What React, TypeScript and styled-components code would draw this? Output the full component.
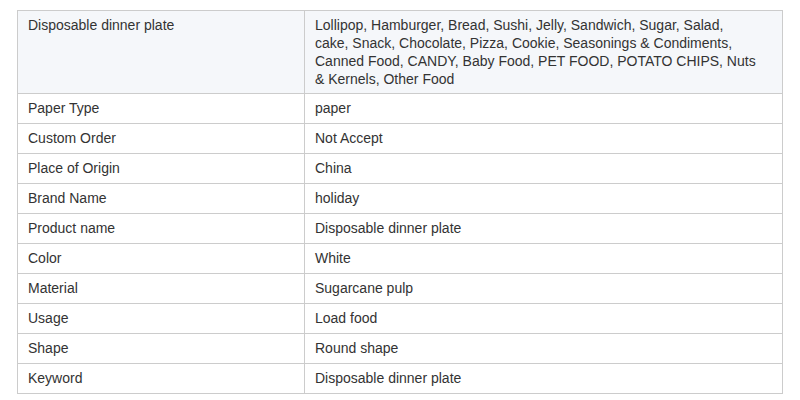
import React from "react";
import styled, { createGlobalStyle } from "styled-components";

const Global = createGlobalStyle`
  html, body { margin: 0; padding: 0; background: #ffffff; }
  body { font-family: "Liberation Sans", Arial, sans-serif; }
`;

const Page = styled.div`
  padding: 10px 18px 0 17px;
`;

const Table = styled.table`
  width: 766px;
  border-collapse: collapse;
  table-layout: fixed;
  font-size: 14px;
  line-height: 18px;
  color: #333333;
`;

const Row = styled.tr<{ $shaded?: boolean }>`
  background: ${(p) => (p.$shaded ? "#f5f7fa" : "#ffffff")};
  height: 30px;
`;

const Cell = styled.td<{ $w?: number }>`
  border: 1px solid #cccccc;
  padding: 5px 10px 5px 10px;
  vertical-align: top;
  ${(p) => (p.$w ? `width: ${p.$w}px;` : "")}
`;

const ValueCell = styled(Cell)`
  padding-right: 22px;
`;

const rows: [string, string][] = [
  [
    "Disposable dinner plate",
    "Lollipop, Hamburger, Bread, Sushi, Jelly, Sandwich, Sugar, Salad, cake, Snack, Chocolate, Pizza, Cookie, Seasonings & Condiments, Canned Food, CANDY, Baby Food, PET FOOD, POTATO CHIPS, Nuts & Kernels, Other Food",
  ],
  ["Paper Type", "paper"],
  ["Custom Order", "Not Accept"],
  ["Place of Origin", "China"],
  ["Brand Name", "holiday"],
  ["Product name", "Disposable dinner plate"],
  ["Color", "White"],
  ["Material", "Sugarcane pulp"],
  ["Usage", "Load food"],
  ["Shape", "Round shape"],
  ["Keyword", "Disposable dinner plate"],
];

export default function App() {
  return (
    <>
      <Global />
      <Page>
        <Table>
          <tbody>
            {rows.map(([k, v], i) => (
              <Row key={k + i} $shaded={i === 0}>
                <Cell $w={i === 0 ? 266 : undefined}>{k}</Cell>
                <ValueCell>{v}</ValueCell>
              </Row>
            ))}
          </tbody>
        </Table>
      </Page>
    </>
  );
}
